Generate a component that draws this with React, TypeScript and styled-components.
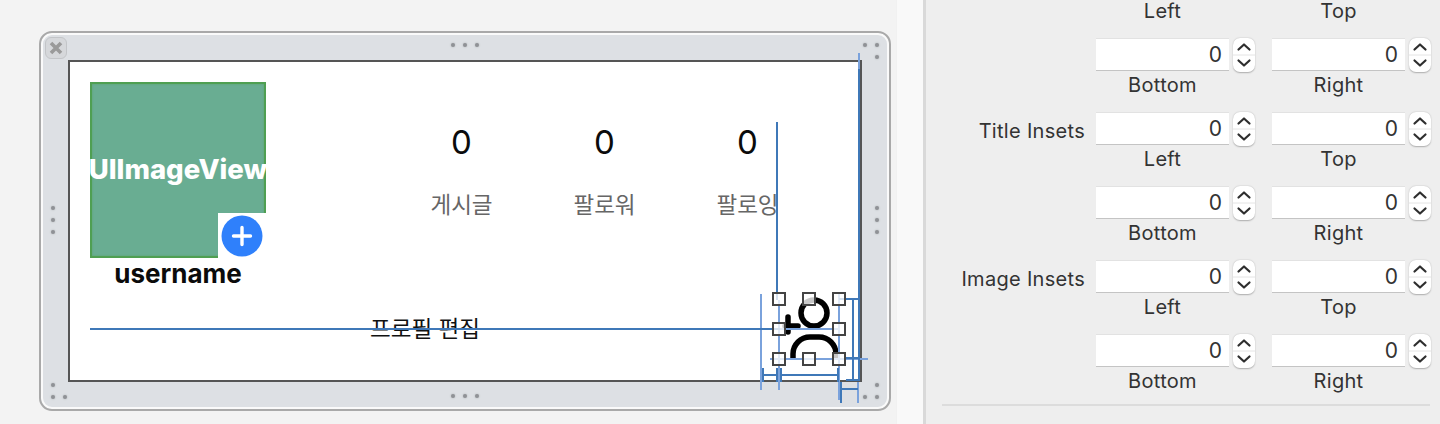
import styled, { createGlobalStyle } from "styled-components";

const GlobalStyle = createGlobalStyle`
  html, body {
    margin: 0;
    padding: 0;
    width: 1440px;
    height: 424px;
    overflow: hidden;
    background: #eeeeee;
    font-family: Inter, "Noto Sans CJK KR", sans-serif;
  }
`;

const Page = styled.div`
  display: flex;
  width: 1440px;
  height: 424px;
  overflow: hidden;
`;

const Canvas = styled.main`
  width: 896px;
  height: 424px;
  flex: none;
  box-sizing: border-box;
  padding: 31px 0 0 39px;
  background: #f3f3f3;
`;

const Strip = styled.div`
  width: 26px;
  flex: none;
  background: #f9f9f9;
  border-right: 3px solid #d9d9d9;
  border-left: 1px solid #f1f1f1;
`;

const SceneFrame = styled.section`
  position: relative;
  box-sizing: border-box;
  width: 852px;
  height: 380px;
  padding: 27px 0 0 27px;
  border: 2px solid #a9a9a9;
  border-radius: 13px;
  background: #dde0e4;
  box-shadow: inset 0 0 0 2px #fafafa;
`;

const CloseButton = styled.div`
  position: absolute;
  left: 4px;
  top: 4px;
  width: 22px;
  height: 22px;
  box-sizing: border-box;
  border: 1px solid #c3c5c8;
  border-radius: 6px;
  background: #d6d8db;
  display: flex;
  align-items: center;
  justify-content: center;
`;

const Grip = styled.span<{ $x: number; $y: number }>`
  position: absolute;
  left: ${(p) => p.$x - 41 - 2}px;
  top: ${(p) => p.$y - 33 - 2}px;
  width: 4px;
  height: 4px;
  border-radius: 50%;
  background: #8f9296;
  box-shadow: 0 0 2px #a9abae;
`;

const Scene = styled.div`
  position: relative;
  box-sizing: border-box;
  width: 794px;
  height: 322px;
  padding: 20px 0 0 20px;
  border: 2px solid #555555;
  background: #ffffff;
`;

const TopRow = styled.div`
  display: flex;
  height: 222px;
`;

const ProfileColumn = styled.div`
  width: 176px;
  flex: none;
`;

const Avatar = styled.div`
  position: relative;
  box-sizing: border-box;
  width: 176px;
  height: 176px;
  padding-bottom: 2px;
  border: 2px solid #4f9f52;
  background: #69ad92;
  box-shadow: inset 0 0 2px #58a468;
  display: flex;
  align-items: center;
  justify-content: center;
  color: #ffffff;
  font-size: 27.5px;
  font-weight: 800;
  white-space: nowrap;
`;

const AddBadge = styled.div`
  position: absolute;
  right: -2px;
  bottom: -2px;
  width: 48px;
  height: 45px;
  background: #ffffff;
  display: flex;
  align-items: center;
  justify-content: center;
`;

const Username = styled.div`
  width: 176px;
  text-align: center;
  color: #0b0b0b;
  font-size: 26px;
  line-height: 32px;
  font-weight: 700;
`;

const StatsRow = styled.div`
  display: flex;
  margin-left: 124px;
  padding-top: 40px;
`;

const Stat = styled.div`
  width: 143px;
  display: flex;
  flex-direction: column;
  align-items: center;
`;

const StatValue = styled.div`
  color: #0b0b0b;
  font-size: 33px;
  line-height: 40px;
`;

const StatLabel = styled.div`
  margin-top: 23px;
  color: #666666;
  font-size: 22.5px;
  line-height: 40px;
  white-space: nowrap;
`;

const EditLabel = styled.div`
  width: 670px;
  margin-top: 5px;
  text-align: center;
  color: #111111;
  font-size: 22.5px;
  line-height: 40px;
`;

const Overlay = styled.svg`
  position: absolute;
  left: 0;
  top: 0;
  pointer-events: none;
`;

const Handle = styled.span<{ $x: number; $y: number }>`
  position: absolute;
  left: ${(p) => p.$x - 41 - 7}px;
  top: ${(p) => p.$y - 33 - 7}px;
  width: 14px;
  height: 14px;
  box-sizing: border-box;
  border: 2px solid #444444;
  background: rgba(255, 255, 255, 0.78);
`;

const Inspector = styled.aside`
  flex: 1;
  height: 424px;
  overflow: hidden;
  background: #eeeeee;
`;

const InsetGrid = styled.div`
  display: grid;
  grid-template-columns: 170px 176px 160px;
  grid-template-rows: 38px repeat(5, 74px);
`;

const RowLabel = styled.div`
  padding: 3px 11px 0 0;
  text-align: right;
  color: #333333;
  font-size: 20px;
  line-height: 33px;
  letter-spacing: 0.3px;
  white-space: nowrap;
`;

const Field = styled.div`
  display: grid;
  grid-template-columns: 133px 22px;
  column-gap: 4px;
  grid-template-rows: 33px 1fr;
  align-content: start;
`;

const ValueBox = styled.div`
  box-sizing: border-box;
  height: 33px;
  padding-right: 7px;
  background: #ffffff;
  border-top: 1px solid #e2e2e2;
  border-bottom: 1px solid #c4c4c4;
  text-align: right;
  color: #333333;
  font-size: 21px;
  line-height: 32px;
`;

const Stepper = styled.div`
  height: 34px;
  border-radius: 7px;
  background: #ffffff;
  box-shadow: 0 0.5px 1.5px rgba(0, 0, 0, 0.28);
`;

const FieldCaption = styled.div`
  grid-column: 1;
  text-align: center;
  color: #333333;
  font-size: 20px;
  line-height: 28px;
  letter-spacing: 0.3px;
`;

const TopCaption = styled(FieldCaption)`
  grid-column: auto;
  width: 133px;
  margin-top: -3px;
`;

const Separator = styled.hr`
  margin: -4px 10px 0 16px;
  border: none;
  height: 2px;
  background: #dcdcdc;
`;

const rows = [
  { title: "", captions: ["Bottom", "Right"] },
  { title: "Title Insets", captions: ["Left", "Top"] },
  { title: "", captions: ["Bottom", "Right"] },
  { title: "Image Insets", captions: ["Left", "Top"] },
  { title: "", captions: ["Bottom", "Right"] },
];

const stats = ["게시글", "팔로워", "팔로잉"];

const grips: [number, number][] = [
  [453, 45], [465, 45], [477, 45],
  [453, 396], [465, 396], [477, 396],
  [53, 208], [53, 220], [53, 232],
  [877, 208], [877, 220], [877, 232],
  [865, 45], [877, 45], [877, 57],
  [877, 385], [865, 397], [877, 397],
  [53, 385], [53, 397], [65, 397],
];

const handles: [number, number][] = [
  [779, 299], [809, 299], [839, 299],
  [779, 329], [839, 329],
  [779, 359], [809, 359], [839, 359],
];

const StepperIcon = () => (
  <Stepper>
    <svg width="22" height="34" viewBox="0 0 22 34" fill="none">
      <path d="M0 17h22" stroke="#e4e4e4" strokeWidth="1" />
      <path d="M5.5 11.5 11 6.5l5.5 5" stroke="#2e2e2e" strokeWidth="2.2" strokeLinecap="round" strokeLinejoin="round" />
      <path d="M5.5 22.5 11 27.5l5.5-5" stroke="#2e2e2e" strokeWidth="2.2" strokeLinecap="round" strokeLinejoin="round" />
    </svg>
  </Stepper>
);

// page coordinates, the frame is shifted by its own offset
const ConstraintLines = () => (
  <Overlay width="960" height="424" viewBox="41 33 960 424" fill="none">
    <g stroke="#000000" fill="none" strokeWidth="5.5">
      <circle cx="814" cy="313" r="13" />
      <path d="M793 358v-4a17 17 0 0 1 17-17h9a17 17 0 0 1 17 17v4" />
      <path d="M788 317v15M785 326h13" strokeLinecap="round" />
    </g>
    <g stroke="#7aa2dc" strokeWidth="2">
      <path d="M859 53v16" />
      <path d="M761 294v96" />
      <path d="M779 300v90" />
      <path d="M770 359h98" />
      <path d="M839 294v106" />
      <path d="M780 329h58" />
      <path d="M858 382v21" />
    </g>
    <g stroke="#3f78b8" strokeWidth="2">
      <path d="M859 69v312" />
      <path d="M777 122v178" />
      <path d="M90 329h690" />
      <path d="M839 299h20" />
      <path d="M853 299v81" />
      <path d="M846 358h13" />
      <path d="M846 380h13" />
      <path d="M763 368v14M777 368v14M763 375h14" />
      <path d="M781 368v14M838 368v14M781 375h57" />
      <path d="M841 382v21M841 389h17" />
    </g>
  </Overlay>
);

const App = () => {
  return (
    <Page>
      <GlobalStyle />
      <Canvas>
        <SceneFrame>
          <CloseButton>
            <svg width="16" height="16" viewBox="0 0 16 16">
              <path d="M3 3l10 10M13 3 3 13" stroke="#9a9a9a" strokeWidth="3.6" />
            </svg>
          </CloseButton>
          {grips.map(([x, y]) => (
            <Grip key={`${x}-${y}`} $x={x} $y={y} />
          ))}
          <Scene>
            <TopRow>
              <ProfileColumn>
                <Avatar>
                  UIImageView
                  <AddBadge>
                    <svg width="42" height="42" viewBox="0 0 42 42">
                      <circle cx="21" cy="21" r="20.5" fill="#2f80fb" />
                      <path d="M21 12.5v17M12.5 21h17" stroke="#ffffff" strokeWidth="3.4" strokeLinecap="round" />
                    </svg>
                  </AddBadge>
                </Avatar>
                <Username>username</Username>
              </ProfileColumn>
              <StatsRow>
                {stats.map((label) => (
                  <Stat key={label}>
                    <StatValue>0</StatValue>
                    <StatLabel>{label}</StatLabel>
                  </Stat>
                ))}
              </StatsRow>
            </TopRow>
            <EditLabel>프로필 편집</EditLabel>
          </Scene>
          <ConstraintLines />
          {handles.map(([x, y]) => (
            <Handle key={`${x}-${y}`} $x={x} $y={y} />
          ))}
        </SceneFrame>
      </Canvas>
      <Strip />
      <Inspector>
        <InsetGrid>
          <div />
          <TopCaption>Left</TopCaption>
          <TopCaption>Top</TopCaption>
          {rows.map((row, i) => (
            <div key={i} style={{ display: "contents" }}>
              <RowLabel>{row.title}</RowLabel>
              {row.captions.map((caption) => (
                <Field key={caption}>
                  <ValueBox>0</ValueBox>
                  <StepperIcon />
                  <FieldCaption>{caption}</FieldCaption>
                </Field>
              ))}
            </div>
          ))}
        </InsetGrid>
        <Separator />
      </Inspector>
    </Page>
  );
};

export default App;
